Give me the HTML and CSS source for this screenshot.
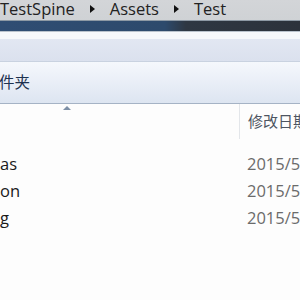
FILE: index.html
```
<!DOCTYPE html>
<html lang="zh-CN">
<head>
  <meta charset="UTF-8" />
  <title>Test</title>
  <link rel="stylesheet" href="styles.css">
</head>
<body>
  <div class="addr">
    <span>TestSpine</span>
    <span class="crumb-arrow"></span>
    <span>Assets</span>
    <span class="crumb-arrow"></span>
    <span>Test</span>
  </div>
  <div class="titleband"></div>
  <div class="gap"></div>
  <div class="menuband"></div>
  <div class="toolbar">
    <span class="tool">件夹</span>
  </div>

  <div class="list">
    <div class="colhead">
      <div class="col-name"><span class="sort"></span></div>
      <div class="col-date">修改日期</div>
    </div>
    <div class="rows">
      <div class="row"><div class="col-name">as</div><div class="col-date">2015/5</div></div>
      <div class="row"><div class="col-name">on</div><div class="col-date">2015/5</div></div>
      <div class="row"><div class="col-name">g</div><div class="col-date">2015/5</div></div>
    </div>
  </div>
</body>
</html>
```

FILE: styles.css
```
body {
  margin: 0;
  width: 300px;
  height: 300px;
  overflow: hidden;
  font-family: "Open Sans", "Noto Sans CJK SC", sans-serif;
  background: #fdfdfd;
}
.addr {
  height: 21px;
  background: linear-gradient(#d3d5d8, #cfd2d5);
  display: flex;
  align-items: flex-start;
  gap: 15px;
  font-size: 16.5px;
  line-height: 17px;
  color: #222;
  box-sizing: border-box;
  border-bottom: 1px solid #8d99a4;
  white-space: nowrap;
}
.crumb-arrow {
  width: 0;
  height: 0;
  border-top: 4px solid transparent;
  border-bottom: 4px solid transparent;
  border-left: 5px solid #111;
  margin-top: 5px;
}
.titleband {
  height: 10px;
  background: linear-gradient(90deg, #2f4d73 0%, #2d4a6c 55%, #2e3742 62%, #2c323b 100%);
}
.gap {
  height: 7px;
  background: #f6f8fb;
  border-top: 1px solid #b9c2cc;
}
.menuband {
  height: 22px;
  background: linear-gradient(#e2e7f2, #dbe1ee);
  border-bottom: 1px solid #c9d2e0;
}
.toolbar {
  height: 41px;
  background: linear-gradient(#f5f8fc, #e9eef7 50%, #dde5f1);
  border-bottom: 1px solid #a5b3c5;
  display: flex;
  align-items: center;
}
.tool {
  font-size: 15.5px;
  color: #1e3250;
  margin-left: -1px;
  margin-top: -2px;
}
.list {
  background: #fdfdfd;
}
.colhead {
  height: 35px;
  display: flex;
}
.colhead .col-name {
  width: 239px;
  flex-shrink: 0;
  border-right: 1px solid #e3e6ea;
  position: relative;
}
.sort {
  position: absolute;
  left: 63px;
  top: 2px;
  border-left: 4px solid transparent;
  border-right: 4px solid transparent;
  border-bottom: 4px solid #7d8fa6;
}
.colhead .col-date {
  padding-left: 8px;
  font-size: 15px;
  line-height: 35px;
  color: #4d5562;
  white-space: nowrap;
}
.rows {
  padding-top: 11px;
}
.row {
  height: 27px;
  display: flex;
  align-items: center;
  font-size: 16.5px;
}
.row .col-name {
  width: 247px;
  flex-shrink: 0;
  color: #1a1a1a;
}
.row .col-date {
  color: #6b6b6b;
  white-space: nowrap;
}
```
